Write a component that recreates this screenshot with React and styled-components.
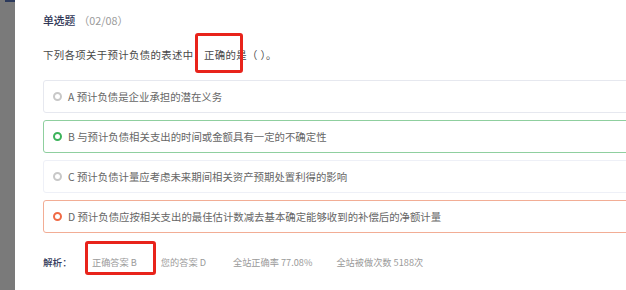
import React from "react";
import styled, { createGlobalStyle } from "styled-components";

const Global = createGlobalStyle`
  html, body { margin: 0; padding: 0; background: #fff; overflow: hidden; }
  body { font-family: "Noto Sans CJK SC", "Noto Sans", sans-serif; }
`;

const Page = styled.div`
  display: flex;
  width: 626px;
  height: 290px;
  overflow: hidden;
  background: #fff;
`;

const Sidebar = styled.div`
  position: relative;
  width: 15px;
  flex: none;
  background: #7a7a7a;
  &::before {
    content: "";
    position: absolute;
    left: 5px;
    right: 0;
    top: 0;
    height: 2px;
    background: #2c3a5c;
  }
`;

const Main = styled.div`
  flex: 1;
  min-width: 0;
  padding: 10px 0 0 28px;
  margin-right: -12px;
`;

const Title = styled.div`
  font-size: 10.8px;
  line-height: 20px;
  color: #2f3656;
  font-weight: 500;
`;

const Count = styled.span`
  color: #9a9a9a;
  font-weight: 400;
  margin-left: 3px;
`;

const Question = styled.div`
  margin-top: 15px;
  font-size: 10.4px;
  letter-spacing: 0.35px;
  line-height: 20px;
  color: #484848;
`;

const Marked = styled.span`
  position: relative;
  &::after {
    content: "";
    position: absolute;
    left: ${(p) => p.$l}px;
    right: ${(p) => p.$r}px;
    top: ${(p) => p.$t}px;
    bottom: ${(p) => p.$b}px;
    border: 3px solid #e8231b;
    border-radius: 3px;
  }
`;

const Options = styled.div`
  margin-top: 15px;
  display: flex;
  flex-direction: column;
  gap: 7px;
`;

const borderColors = {
  normal: "#e6e8ef",
  light: "#eef0f7",
  right: "#8fcf9f",
  wrong: "#f2ad95",
};

const Card = styled.div`
  box-sizing: border-box;
  height: 33px;
  display: flex;
  align-items: center;
  padding-left: 9px;
  border: 1px solid ${(p) => borderColors[p.$variant]};
  border-radius: 3px;
  background: #fff;
  font-size: 10.4px;
  color: #666;
`;

const ringColors = {
  normal: "#c8c8c8",
  light: "#c8c8c8",
  right: "#3db35b",
  wrong: "#f06a45",
};

const Ring = styled.span`
  box-sizing: border-box;
  width: 9px;
  height: 9px;
  border-radius: 50%;
  border: ${(p) => (p.$variant === "right" || p.$variant === "wrong" ? 2.5 : 2)}px solid
    ${(p) => ringColors[p.$variant]};
  margin-right: 6px;
  flex: none;
`;

const Footer = styled.div`
  margin-top: 19px;
  display: flex;
  align-items: center;
  font-size: 9.2px;
  line-height: 20px;
  color: #9a9a9a;
`;

const Label = styled.span`
  width: 49px;
  color: #343b5c;
  font-weight: 500;
  font-size: 9.6px;
`;

const Stat = styled.span`
  margin-right: ${(p) => p.$gap}px;
`;

const options = [
  { v: "normal", t: "A 预计负债是企业承担的潜在义务" },
  { v: "right", t: "B 与预计负债相关支出的时间或金额具有一定的不确定性" },
  { v: "light", t: "C 预计负债计量应考虑未来期间相关资产预期处置利得的影响" },
  { v: "wrong", t: "D 预计负债应按相关支出的最佳估计数减去基本确定能够收到的补偿后的净额计量" },
];

export default function App() {
  return (
    <>
      <Global />
      <Page>
        <Sidebar />
        <Main>
          <Title>
            单选题<Count>（02/08）</Count>
          </Title>
          <Question>
            下列各项关于预计负债的表述中
            <Marked $l={2} $r={4} $t={-14} $b={-11}>
              ，正确的是
            </Marked>
            （ ）。
          </Question>
          <Options>
            {options.map((o) => (
              <Card key={o.t} $variant={o.v}>
                <Ring $variant={o.v} />
                {o.t}
              </Card>
            ))}
          </Options>
          <Footer>
            <Label>解析：</Label>
            <Stat $gap={24}>
              <Marked $l={-7} $r={-19} $t={-14} $b={-6}>
                正确答案 B
              </Marked>
            </Stat>
            <Stat $gap={27}>您的答案 D</Stat>
            <Stat $gap={24}>全站正确率 77.08%</Stat>
            <Stat $gap={0}>全站被做次数 5188次</Stat>
          </Footer>
        </Main>
      </Page>
    </>
  );
}
